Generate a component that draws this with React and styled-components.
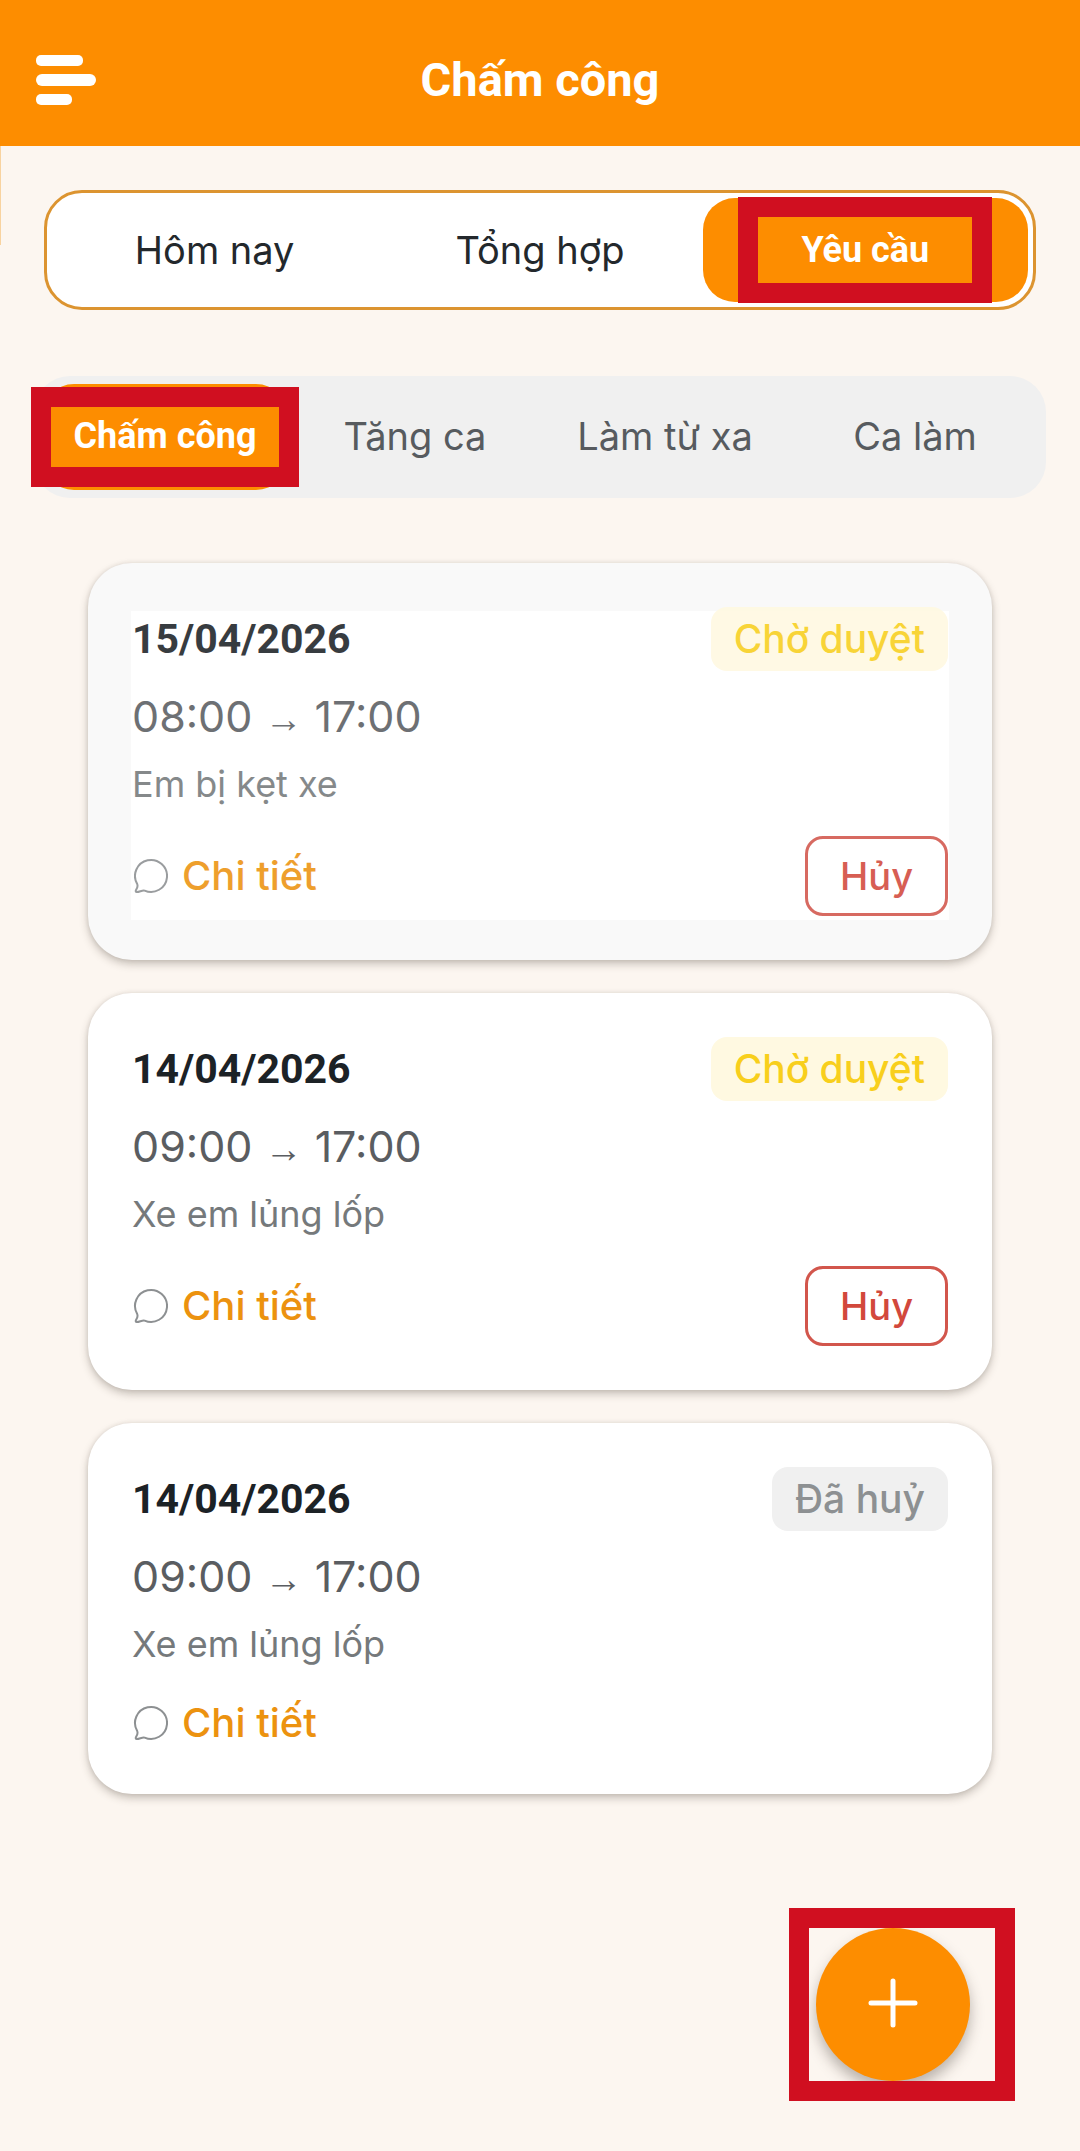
import React, { useState } from 'react';
import styled, { createGlobalStyle, css } from 'styled-components';

const mainTabs = ['Hôm nay', 'Tổng hợp', 'Yêu cầu'];
const requestTabs = ['Chấm công', 'Tăng ca', 'Làm từ xa', 'Ca làm'];

const requests = [
  { id: 1, date: '15/04/2026', from: '08:00', to: '17:00', reason: 'Em bị kẹt xe', status: 'pending', pressed: true },
  { id: 2, date: '14/04/2026', from: '09:00', to: '17:00', reason: 'Xe em lủng lốp', status: 'pending' },
  { id: 3, date: '14/04/2026', from: '09:00', to: '17:00', reason: 'Xe em lủng lốp', status: 'canceled' },
];

const statusLabels = {
  pending: 'Chờ duyệt',
  canceled: 'Đã huỷ',
};

function MenuIcon() {
  return (
    <svg width="60" height="50" viewBox="0 0 60 50" fill="#fff" aria-hidden="true">
      <rect x="0" y="0" width="47" height="11" rx="5" />
      <rect x="0" y="19" width="60" height="12" rx="6" />
      <rect x="0" y="39" width="36" height="11" rx="5" />
    </svg>
  );
}

function ChatIcon() {
  return (
    <svg width="36" height="36" viewBox="-1 0 36 36" fill="none" stroke="#8d9092" strokeWidth="2" strokeLinejoin="round" aria-hidden="true">
      <path d="M4.2 26A16 16 0 1 1 11.6 32.6C9.2 31.9 6.4 34.2 3.6 34.1C2.3 34 2.6 32.6 3.4 31.2C4.4 29.6 5 28 4.2 26Z" />
    </svg>
  );
}

function PlusIcon() {
  return (
    <svg width="50" height="50" viewBox="0 0 50 50" stroke="#fff" strokeWidth="5" strokeLinecap="round" aria-hidden="true">
      <path d="M25 3V47M3 25H47" />
    </svg>
  );
}

function RequestCard({ request }) {
  const { date, from, to, reason, status, pressed } = request;

  return (
    <Card $pressed={pressed}>
      <CardTop>
        <DateText>{date}</DateText>
        <Badge $status={status}>{statusLabels[status]}</Badge>
      </CardTop>
      <Time>
        {from} <Arrow>→</Arrow> {to}
      </Time>
      <Reason>{reason}</Reason>
      <CardBottom>
        <DetailLink href="#chi-tiet">
          <ChatIcon />
          Chi tiết
        </DetailLink>
        {status === 'pending' && <CancelButton type="button">Hủy</CancelButton>}
      </CardBottom>
    </Card>
  );
}

function App() {
  const [mainTab, setMainTab] = useState('Yêu cầu');
  const [requestTab, setRequestTab] = useState('Chấm công');

  return (
    <Page>
      <GlobalStyle />
      <Header>
        <MenuButton type="button" aria-label="Menu">
          <MenuIcon />
        </MenuButton>
        <Title>Chấm công</Title>
        <div />
      </Header>

      <MainTabs>
        {mainTabs.map((name) => (
          <MainTab key={name} type="button" $active={name === mainTab} onClick={() => setMainTab(name)}>
            {name}
            {name === 'Yêu cầu' && <Marker $width={254} $height={106} />}
          </MainTab>
        ))}
      </MainTabs>

      <RequestTabs>
        {requestTabs.map((name) => (
          <RequestTab key={name} type="button" $active={name === requestTab} onClick={() => setRequestTab(name)}>
            {name}
            {name === 'Chấm công' && <Marker $width={268} $height={100} />}
          </RequestTab>
        ))}
      </RequestTabs>

      <List>
        {requests.map((request) => (
          <RequestCard key={request.id} request={request} />
        ))}
      </List>

      <AddFrame>
        <AddButton type="button" aria-label="Thêm yêu cầu">
          <PlusIcon />
        </AddButton>
      </AddFrame>
    </Page>
  );
}

const GlobalStyle = createGlobalStyle`
  * {
    box-sizing: border-box;
  }

  body {
    margin: 0;
    background: #fcf6f0;
    font-family: Inter, "Noto Sans", sans-serif;
  }

  button {
    padding: 0;
    border: none;
    background: none;
    font-family: inherit;
    cursor: pointer;
  }
`;

const Page = styled.div`
  min-height: 100vh;
  background: linear-gradient(#f8d3a0, #f8d3a0) 0 146px / 1px 99px no-repeat #fcf6f0;
`;

const Header = styled.header`
  display: grid;
  grid-template-columns: 1fr auto 1fr;
  align-items: center;
  height: 146px;
  padding: 14px 36px 0;
  background: #fd8d00;
`;

const MenuButton = styled.button`
  justify-self: start;
  display: flex;
`;

const Title = styled.h1`
  margin: 0;
  color: #fff;
  font-family: Roboto, sans-serif;
  font-size: 47px;
  font-weight: 700;
  line-height: 60px;
`;

const activeTab = css`
  background: #fd8d00;
  color: #fff;
  font-family: Roboto, sans-serif;
  font-size: 36px;
  font-weight: 700;
`;

const MainTabs = styled.nav`
  display: flex;
  height: 120px;
  margin: 44px 44px 0;
  padding: 5px;
  border: 3px solid #dc9430;
  border-radius: 38px;
  background: #fff;
`;

const MainTab = styled.button`
  position: relative;
  flex: 1;
  border-radius: 32px;
  color: #23282c;
  font-size: 38px;
  ${({ $active }) => $active && activeTab}
`;

const RequestTabs = styled.nav`
  display: flex;
  gap: 4px;
  height: 122px;
  margin: 66px 34px 0;
  padding: 8px;
  border-radius: 36px;
  background: #f0f0f0;
`;

const RequestTab = styled.button`
  position: relative;
  flex: 1;
  padding-bottom: 3px;
  border-radius: 32px;
  color: #575b5f;
  font-size: 38px;
  ${({ $active }) => $active && activeTab}
`;

// red outline that points out the control under it
const Marker = styled.span`
  position: absolute;
  top: 50%;
  left: 50%;
  width: ${({ $width }) => $width}px;
  height: ${({ $height }) => $height}px;
  transform: translate(-50%, -50%);
  border: 20px solid #d00f20;
  pointer-events: none;
`;

const List = styled.main`
  display: flex;
  flex-direction: column;
  gap: 33px;
  padding: 65px 88px;
`;

const DateText = styled.h2`
  margin: 0;
  color: #1c2226;
  font-family: Roboto, sans-serif;
  font-size: 41px;
  font-weight: 700;
`;

const CardTop = styled.div`
  display: flex;
  align-items: center;
  justify-content: space-between;
  height: 64px;
`;

const Badge = styled.span`
  padding: 0 23px;
  border-radius: 16px;
  background: ${({ $status }) => ($status === 'pending' ? '#fff9e1' : '#f0f0f0')};
  color: ${({ $status }) => ($status === 'pending' ? '#f8cf1c' : '#8d9092')};
  font-size: 39px;
  font-weight: 500;
  line-height: 64px;
`;

const Time = styled.p`
  margin: 16px 0 0;
  color: #5a5d61;
  font-size: 43px;
  line-height: 58px;
`;

const Arrow = styled.span`
  font-family: "Liberation Sans", sans-serif;
  font-size: 38px;
  line-height: 1;
`;

const Reason = styled.p`
  margin: 12px 0 0;
  color: #75797b;
  font-size: 36px;
  line-height: 54px;
`;

const CardBottom = styled.div`
  display: flex;
  align-items: center;
  justify-content: space-between;
  margin-top: 25px;
`;

const DetailLink = styled.a`
  display: flex;
  align-items: center;
  gap: 14px;
  color: #ec920f;
  font-size: 40px;
  font-weight: 500;
  line-height: 54px;
  text-decoration: none;
`;

const CancelButton = styled.button`
  width: 143px;
  height: 80px;
  border: 3px solid #d2564c;
  border-radius: 18px;
  color: #d2483c;
  font-size: 38px;
  font-weight: 500;
`;

const Card = styled.article`
  padding: 44px;
  border-radius: 44px;
  background: #fff;
  box-shadow: 0 4px 8px rgba(60, 50, 40, 0.28), 0 0 4px rgba(60, 50, 40, 0.1);

  ${({ $pressed }) =>
    $pressed &&
    css`
      background: linear-gradient(#fff, #fff) 43px 48px / calc(100% - 86px) calc(100% - 88px) no-repeat #f9f9f9;

      ${DateText}, ${Time}, ${Reason}, ${Badge}, ${CardBottom} {
        opacity: 0.88;
      }
    `}
`;

const AddFrame = styled.div`
  position: fixed;
  right: 65px;
  bottom: 50px;
  padding: 0 25px 0 7px;
  border: 20px solid #d00f20;
  overflow: hidden;
`;

const AddButton = styled.button`
  display: flex;
  align-items: center;
  justify-content: center;
  width: 154px;
  height: 153px;
  padding-bottom: 4px;
  border-radius: 50%;
  background: #fd8d00;
  box-shadow: 0 8px 14px rgba(60, 50, 40, 0.35);
`;

export default App;
